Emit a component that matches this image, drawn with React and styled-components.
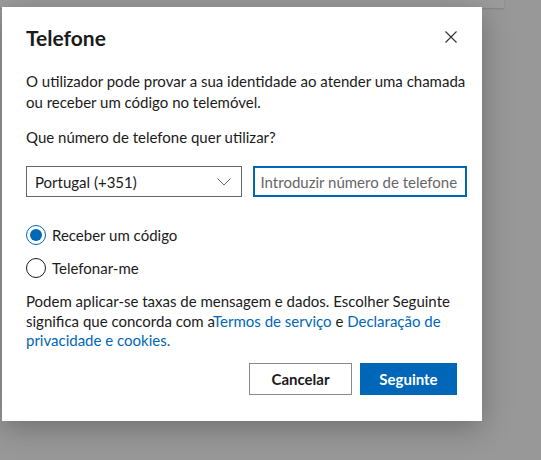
import styled, { createGlobalStyle } from "styled-components";

const GlobalStyle = createGlobalStyle`
  html, body {
    margin: 0;
    padding: 0;
    background: #999999;
    font-family: "Segoe UI", Lato, "Liberation Sans", sans-serif;
  }
`;

const Page = styled.div`
  position: relative;
  width: 541px;
  height: 460px;
  overflow: hidden;
  background: #989898;
  padding: 7px 0 0 2px;
  box-sizing: border-box;
`;

const BackPanel = styled.div`
  position: absolute;
  left: 0;
  top: 0;
  width: 504px;
  height: 8px;
  background: #9c9c9c;
  box-shadow: 0 1px 2px rgba(0, 0, 0, 0.15);
`;

const Dialog = styled.div`
  position: relative;
  width: 480px;
  height: 414px;
  background: #ffffff;
  box-shadow: 0 6px 28px rgba(0, 0, 0, 0.28);
  padding: 18px 15px 0 24px;
  box-sizing: border-box;
  color: #1b1b1b;
`;

const Header = styled.div`
  display: flex;
  justify-content: space-between;
  align-items: center;
  padding-right: 9px;
  height: 24px;
`;

const Title = styled.h1`
  margin: 0;
  font-size: 21px;
  font-weight: 700;
  color: #1b1b1b;
`;

const CloseButton = styled.button`
  border: none;
  background: none;
  padding: 0;
  width: 14px;
  height: 14px;
  display: flex;
  cursor: pointer;
`;

const Text = styled.p`
  margin: ${(p) => p.$mt || 0}px 0 0;
  font-size: 15px;
  line-height: ${(p) => p.$lh || 21}px;
  color: #1b1b1b;
`;

const Link = styled.a`
  color: #0067b8;
  text-decoration: none;
`;

const Fields = styled.div`
  display: flex;
  gap: 11px;
  margin-top: 18px;
`;

const Select = styled.div`
  width: 216px;
  height: 31px;
  border: 1px solid #666666;
  box-sizing: border-box;
  display: flex;
  align-items: center;
  justify-content: space-between;
  padding: 0 10px 0 8px;
  font-size: 15px;
  color: #1b1b1b;
`;

const Input = styled.input`
  width: 215px;
  height: 31px;
  border: 2px solid #0067b8;
  box-sizing: border-box;
  padding: 0 6px;
  font-family: inherit;
  font-size: 15px;
  color: #1b1b1b;
  outline: none;
  &::placeholder {
    color: #666666;
  }
`;

const Options = styled.div`
  display: flex;
  flex-direction: column;
  gap: 13px;
  margin-top: 28px;
`;

const Option = styled.label`
  display: flex;
  align-items: center;
  gap: 6px;
  font-size: 15px;
  color: #1b1b1b;
  height: 20px;
`;

const Radio = styled.span`
  width: 20px;
  height: 20px;
  border-radius: 50%;
  box-sizing: border-box;
  border: 1px solid ${(p) => (p.$checked ? "#0067b8" : "#1b1b1b")};
  display: flex;
  align-items: center;
  justify-content: center;
  &::after {
    content: "";
    width: 12px;
    height: 12px;
    border-radius: 50%;
    background: #0067b8;
    display: ${(p) => (p.$checked ? "block" : "none")};
  }
`;

const Footer = styled.div`
  display: flex;
  justify-content: flex-end;
  gap: 8px;
  margin-top: 12px;
  padding-right: 10px;
`;

const Button = styled.button`
  height: 32px;
  min-width: ${(p) => p.$w}px;
  box-sizing: border-box;
  font-family: inherit;
  font-size: 15px;
  font-weight: 700;
  border: 1px solid ${(p) => (p.$primary ? "#0067b8" : "#8a8a8a")};
  background: ${(p) => (p.$primary ? "#0067b8" : "#ffffff")};
  color: ${(p) => (p.$primary ? "#ffffff" : "#1b1b1b")};
  cursor: pointer;
`;

export default function App() {
  return (
    <>
      <GlobalStyle />
      <Page>
        <BackPanel />
        <Dialog>
          <Header>
            <Title>Telefone</Title>
            <CloseButton aria-label="Fechar">
              <svg width="14" height="14" viewBox="0 0 14 14">
                <path d="M1.5 1.5 L12.5 12.5 M12.5 1.5 L1.5 12.5" stroke="#333" strokeWidth="1.1" fill="none" />
              </svg>
            </CloseButton>
          </Header>
          <Text $mt={22}>
            O utilizador pode provar a sua identidade ao atender uma chamada ou receber um código no telemóvel.
          </Text>
          <Text $mt={14}>Que número de telefone quer utilizar?</Text>
          <Fields>
            <Select>
              <span>Portugal (+351)</span>
              <svg width="14" height="8" viewBox="0 0 14 8">
                <path d="M0.5 0.5 L7 7 L13.5 0.5" stroke="#666" strokeWidth="1" fill="none" />
              </svg>
            </Select>
            <Input placeholder="Introduzir número de telefone" autoFocus />
          </Fields>
          <Options>
            <Option>
              <Radio $checked />
              Receber um código
            </Option>
            <Option>
              <Radio />
              Telefonar-me
            </Option>
          </Options>
          <Text $mt={14} $lh={19.5}>
            Podem aplicar-se taxas de mensagem e dados. Escolher Seguinte significa que concorda com a
            <Link href="#">Termos de serviço</Link> e <Link href="#">Declaração de privacidade e cookies.</Link>
          </Text>
          <Footer>
            <Button $w={103}>Cancelar</Button>
            <Button $primary $w={97}>Seguinte</Button>
          </Footer>
        </Dialog>
      </Page>
    </>
  );
}
